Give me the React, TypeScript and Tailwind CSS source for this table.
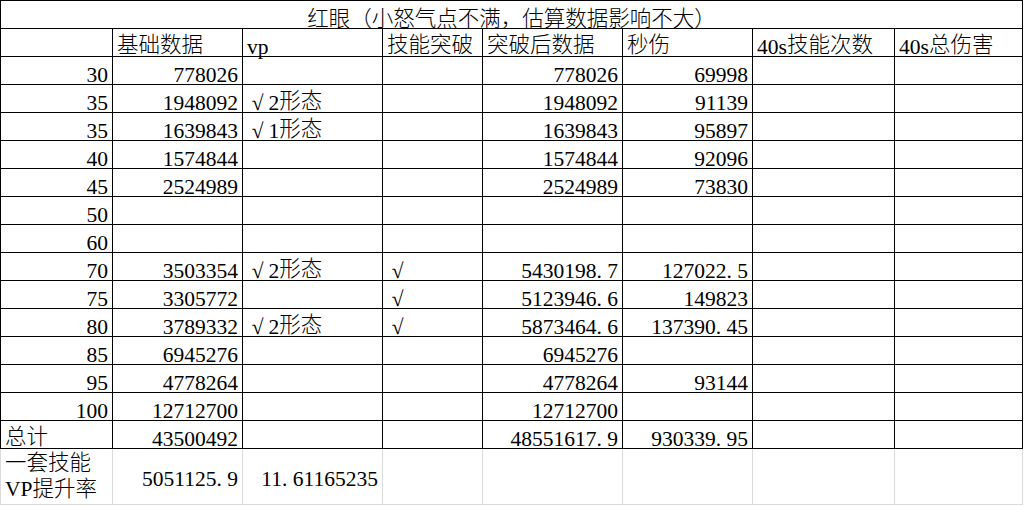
import React from "react";

type Align = "l" | "r";

const rows: string[][] = [
  ["30", "778026", "", "", "778026", "69998"],
  ["35", "1948092", "√2形态", "", "1948092", "91139"],
  ["35", "1639843", "√1形态", "", "1639843", "95897"],
  ["40", "1574844", "", "", "1574844", "92096"],
  ["45", "2524989", "", "", "2524989", "73830"],
  ["50", "", "", "", "", ""],
  ["60", "", "", "", "", ""],
  ["70", "3503354", "√2形态", "√", "5430198.7", "127022.5"],
  ["75", "3305772", "", "√", "5123946.6", "149823"],
  ["80", "3789332", "√2形态", "√", "5873464.6", "137390.45"],
  ["85", "6945276", "", "", "6945276", ""],
  ["95", "4778264", "", "", "4778264", "93144"],
  ["100", "12712700", "", "", "12712700", ""],
];

function Num({ v }: { v: string }) {
  const i = v.indexOf(".");
  if (i < 0) return <>{v}</>;
  return (
    <>
      {v.slice(0, i)}
      <span className="inline-block w-[10.75px] text-left">.</span>
      {v.slice(i + 1)}
    </>
  );
}

function Cjk({ v }: { v: string }) {
  const parts = v.split(/([\u3000-\u9fff\uff00-\uffef]+)/).filter((p) => p !== "");
  return (
    <>
      {parts.map((p, i) =>
        /[\u3000-\u9fff\uff00-\uffef]/.test(p) ? (
          <span key={i} className="align-[2px]">
            {p}
          </span>
        ) : (
          <React.Fragment key={i}>{p}</React.Fragment>
        )
      )}
    </>
  );
}

function Txt({ v }: { v: string }) {
  if (v.startsWith("√")) {
    return (
      <>
        <span className="inline-block w-[21.5px] text-center">√</span>
        <Cjk v={v.slice(1)} />
      </>
    );
  }
  return <Cjk v={v} />;
}

function Cell({
  v,
  align,
  first,
}: {
  v: string;
  align: Align;
  first?: boolean;
}) {
  return (
    <div
      className={
        "h-[28px] border-r border-b border-black flex items-end leading-[18px] whitespace-nowrap " +
        (first ? "border-l " : "") +
        (align === "r" ? "justify-end pr-[4px]" : "justify-start pl-[4px]")
      }
    >
      <div>{align === "r" ? <Num v={v} /> : <Txt v={v} />}</div>
    </div>
  );
}

export default function App() {
  const header = ["", "基础数据", "vp", "技能突破", "突破后数据", "秒伤", "40s技能次数", "40s总伤害"];
  return (
    <div className="w-[1025px] h-[506px] bg-white text-black text-[21.5px] font-light font-['Liberation_Serif','Noto_Sans_CJK_SC',serif]">
      <div className="grid grid-cols-[113px_130px_140px_100px_140px_130px_142px_128px] w-[1023px]">
        <div className="col-span-8 h-[29px] border border-black flex items-end justify-center leading-[18px] whitespace-nowrap">
          <div>红眼（小怒气点不满，估算数据影响不大）</div>
        </div>
        {header.map((h, i) => (
          <Cell key={"h" + i} v={h} align="l" first={i === 0} />
        ))}
        {rows.map((r, ri) => (
          <React.Fragment key={"r" + ri}>
            <Cell v={r[0]} align="r" first />
            <Cell v={r[1]} align="r" />
            <Cell v={r[2]} align="l" />
            <Cell v={r[3]} align="l" />
            <Cell v={r[4]} align="r" />
            <Cell v={r[5]} align="r" />
            <Cell v="" align="l" />
            <Cell v="" align="l" />
          </React.Fragment>
        ))}
        <Cell v="总计" align="l" first />
        <Cell v="43500492" align="r" />
        <Cell v="" align="l" />
        <Cell v="" align="l" />
        <Cell v="48551617.9" align="r" />
        <Cell v="930339.95" align="r" />
        <Cell v="" align="l" />
        <Cell v="" align="l" />

        <div className="h-[56px] border-l border-r border-b border-[#dadada] flex flex-col pl-[4px] pt-[1px] leading-[26px] whitespace-nowrap">
          <div>一套技能</div>
          <div>VP提升率</div>
        </div>
        <div className="h-[56px] border-r border-b border-[#dadada] flex items-start justify-end pr-[4px] pt-[21px] leading-[18px] whitespace-nowrap">
          <div>
            <Num v="5051125.9" />
          </div>
        </div>
        <div className="h-[56px] border-r border-b border-[#dadada] flex items-start justify-end pr-[4px] pt-[21px] leading-[18px] whitespace-nowrap">
          <div>
            <Num v="11.61165235" />
          </div>
        </div>
        <div className="h-[56px] border-r border-b border-[#dadada]" />
        <div className="h-[56px] border-r border-b border-[#dadada]" />
        <div className="h-[56px] border-r border-b border-[#dadada]" />
        <div className="h-[56px] border-r border-b border-[#dadada]" />
        <div className="h-[56px] border-r border-b border-[#dadada]" />
      </div>
    </div>
  );
}
